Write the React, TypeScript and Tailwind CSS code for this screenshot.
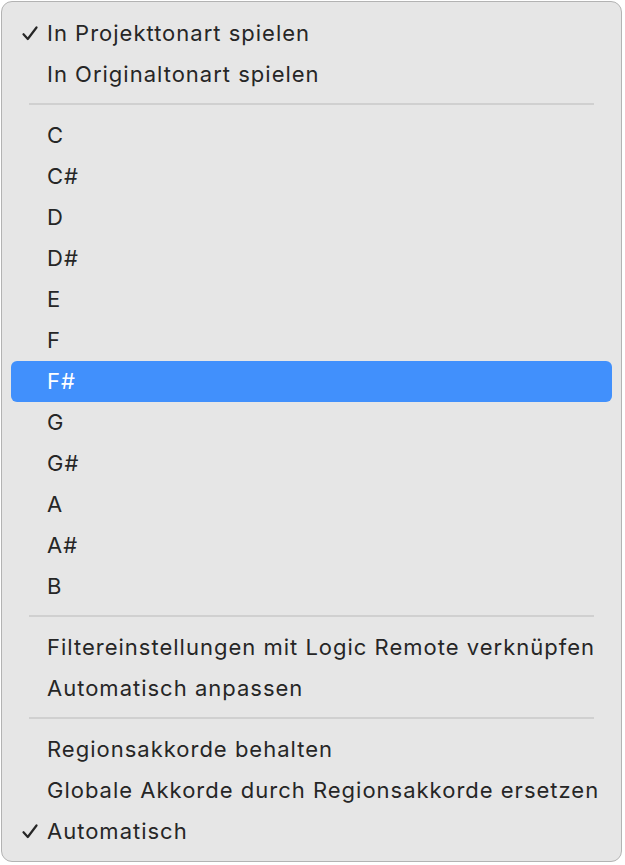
import React from 'react';

type Item =
  | { kind: 'item'; label: string; checked?: boolean; active?: boolean }
  | { kind: 'sep' };

const items: Item[] = [
  { kind: 'item', label: 'In Projekttonart spielen', checked: true },
  { kind: 'item', label: 'In Originaltonart spielen' },
  { kind: 'sep' },
  { kind: 'item', label: 'C' },
  { kind: 'item', label: 'C#' },
  { kind: 'item', label: 'D' },
  { kind: 'item', label: 'D#' },
  { kind: 'item', label: 'E' },
  { kind: 'item', label: 'F' },
  { kind: 'item', label: 'F#', active: true },
  { kind: 'item', label: 'G' },
  { kind: 'item', label: 'G#' },
  { kind: 'item', label: 'A' },
  { kind: 'item', label: 'A#' },
  { kind: 'item', label: 'B' },
  { kind: 'sep' },
  { kind: 'item', label: 'Filtereinstellungen mit Logic Remote verknüpfen' },
  { kind: 'item', label: 'Automatisch anpassen' },
  { kind: 'sep' },
  { kind: 'item', label: 'Regionsakkorde behalten' },
  { kind: 'item', label: 'Globale Akkorde durch Regionsakkorde ersetzen' },
  { kind: 'item', label: 'Automatisch', checked: true },
];

const Check = () => (
  <svg width="16" height="15" viewBox="0 0 16 15">
    <path
      d="M1.5 8.2 L5.8 13 L14.5 1.5"
      fill="none"
      stroke="currentColor"
      strokeWidth="2.2"
      strokeLinecap="round"
      strokeLinejoin="round"
    />
  </svg>
);

export default function App() {
  return (
    <div className="min-h-[865px] bg-white pl-px pt-px">
      <div className="flex h-[861px] w-[621px] flex-col rounded-[11px] border border-[#b3b3b3] bg-[#e6e6e6] px-[9px] pt-[11px] font-['Inter','Liberation_Sans',sans-serif] text-[22px] text-[#262626]">
        {items.map((item, i) =>
          item.kind === 'sep' ? (
            <div key={i} className="h-[20px] px-[18px] pt-[8px]">
              <div className="h-[2px] w-full bg-[#d0d0d0]" />
            </div>
          ) : (
            <div
              key={i}
              className={
                'flex h-[41px] items-center rounded-[6px] pl-[11px] ' +
                (item.active ? 'bg-[#4190fc] text-white' : '')
              }
            >
              <div className="flex w-[25px] items-center">
                {item.checked && <Check />}
              </div>
              <span className="tracking-[1px]">{item.label}</span>
            </div>
          )
        )}
      </div>
    </div>
  );
}
